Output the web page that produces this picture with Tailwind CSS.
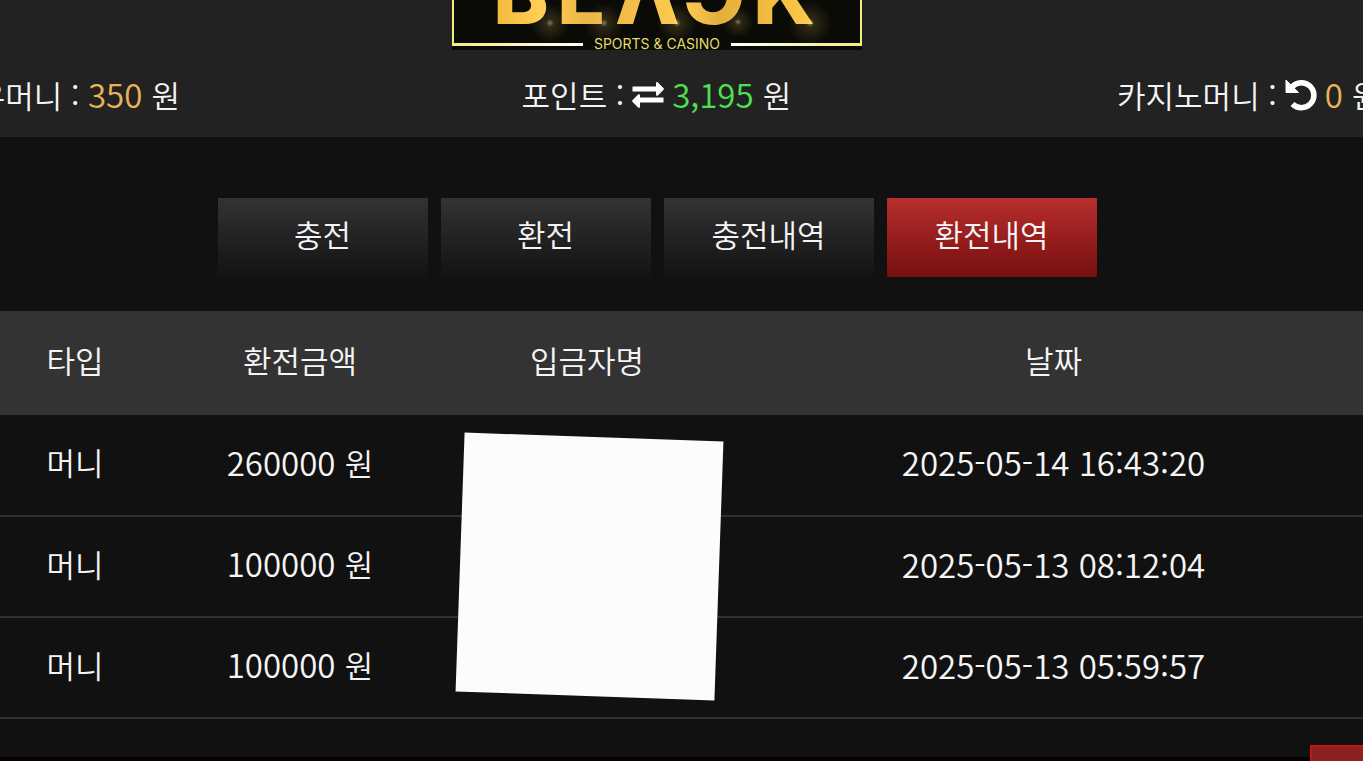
<!DOCTYPE html>
<html lang="ko">
<head>
  <meta charset="UTF-8">
  <meta name="viewport" content="width=device-width, initial-scale=1">
  <title>환전내역</title>
  <script src="https://cdn.jsdelivr.net/npm/@tailwindcss/browser@4"></script>
</head>
<body class="relative h-screen overflow-hidden bg-[#111111] text-[#f5f5f5] font-[350] text-[31px] leading-10 font-['Noto_Sans_CJK_KR',sans-serif]">

  <header class="overflow-hidden bg-[#222222] h-[137px]">
    <a href="#" class="block pr-[49px]">
      <svg class="block mx-auto" width="410" height="50" viewBox="0 0 410 50" role="img" aria-label="BLACK Sports &amp; Casino">
        <defs>
          <linearGradient id="gold" x1="0" y1="0" x2="1" y2="0">
            <stop offset="0" stop-color="#f3b93a"/>
            <stop offset="0.15" stop-color="#ffcf55"/>
            <stop offset="0.3" stop-color="#eab544"/>
            <stop offset="0.6" stop-color="#ffcb50"/>
            <stop offset="0.7" stop-color="#e3ae3c"/>
            <stop offset="1" stop-color="#ffc845"/>
          </linearGradient>
          <linearGradient id="lineL" x1="0" y1="0" x2="1" y2="0">
            <stop offset="0" stop-color="#f3ee7c"/>
            <stop offset="1" stop-color="#ffffff"/>
          </linearGradient>
          <linearGradient id="lineR" x1="0" y1="0" x2="1" y2="0">
            <stop offset="0" stop-color="#ffffff"/>
            <stop offset="1" stop-color="#f3ee7c"/>
          </linearGradient>
          <radialGradient id="glow">
            <stop offset="0" stop-color="#fff0b0" stop-opacity="0.5"/>
            <stop offset="0.2" stop-color="#ffd870" stop-opacity="0.15"/>
            <stop offset="1" stop-color="#ffd870" stop-opacity="0"/>
          </radialGradient>
        </defs>
        <rect width="410" height="50" fill="#0a0a06"/>
        <text x="41 105 163 231 301" y="24" font-family="Inter, sans-serif" font-weight="800" font-size="84" fill="url(#gold)">BLΛƆK</text>
        <circle cx="98" cy="23" r="20" fill="url(#glow)"/>
        <circle cx="152" cy="23" r="20" fill="url(#glow)"/>
        <circle cx="225" cy="23" r="20" fill="url(#glow)"/>
        <circle cx="286" cy="22" r="16" fill="url(#glow)"/>
        <circle cx="358" cy="23" r="22" fill="url(#glow)"/>
        <rect x="0" y="0" width="2" height="46" fill="#f3ee7c"/>
        <rect x="408" y="0" width="2" height="46" fill="#f3ee7c"/>
        <rect x="0" y="43" width="131" height="3" fill="url(#lineL)"/>
        <rect x="279" y="43" width="131" height="3" fill="url(#lineR)"/>
        <text x="205" y="49" text-anchor="middle" font-family="Inter, sans-serif" font-weight="400" font-size="14" fill="#e3dc6a">SPORTS &amp; CASINO</text>
      </svg>
    </a>

    <!-- balances: wider than the window, side columns run off screen -->
    <div class="grid grid-cols-3 -ml-[232px] -mr-[182px] mt-6 text-center whitespace-nowrap">
      <div>보유머니 : <span class="text-[33px] text-[#e8b45a]">350 </span>원</div>
      <div class="flex justify-center items-center gap-2">
        <span>포인트 :</span>
        <button type="button" aria-label="포인트 전환">
          <svg class="block" width="32" height="26" viewBox="0 0 32 26" fill="#ffffff">
            <path d="M0.500 4.500h23.500v-3.300c0-1 1.200-1.500 1.900-.8l5.500 5.500c.6.600.6 1.500 0 2.100l-5.500 5.500c-.7.700-1.900.2-1.900-.8v-3.200H.5z"/>
            <path d="M31.500 15.500H8v-2.200c0-1-1.200-1.500-1.900-.8L.6 18c-.6.600-.6 1.500 0 2.100l5.500 5.500c.7.700 1.900.2 1.900-.8v-4.300h23.500z"/>
          </svg>
        </button>
        <span><span class="text-[33px] text-[#4fe052]">3,195 </span>원</span>
      </div>
      <div class="flex justify-center items-center gap-2">
        <span>카지노머니 :</span>
        <button type="button" aria-label="새로고침">
          <svg class="block" width="32" height="32" viewBox="0 0 32 32">
            <path d="M7 8A12.500 12.500 0 1 1 7.500 25" fill="none" stroke="#ffffff" stroke-width="5.500"/>
            <path d="M1 1v12.500h12.500z" fill="#ffffff" stroke="#ffffff" stroke-linejoin="round"/>
          </svg>
        </button>
        <span><span class="text-[33px] text-[#e8b45a]">0 </span>원</span>
      </div>
    </div>
  </header>

  <nav class="flex justify-center gap-[13px] pt-[61px] pr-[49px]">
    <button type="button" class="w-[210px] h-[79px] pb-2 bg-linear-to-b from-[#333333] to-[#131313]">충전</button>
    <button type="button" class="w-[210px] h-[79px] pb-2 bg-linear-to-b from-[#333333] to-[#131313]">환전</button>
    <button type="button" class="w-[210px] h-[79px] pb-2 bg-linear-to-b from-[#333333] to-[#131313]">충전내역</button>
    <button type="button" class="w-[210px] h-[79px] pb-2 bg-linear-to-b from-[#b82e2e] to-[#770e0e]">환전내역</button>
  </nav>

  <div class="relative mt-[34px] -mr-5">
    <table class="w-full table-fixed text-center">
      <thead>
        <tr class="h-[104px] bg-[#333333]">
          <th class="w-[150px] pb-1.5 font-[350]">타입</th>
          <th class="w-[300px] pb-1.5 font-[350]">환전금액</th>
          <th class="w-[274px] pb-1.5 font-[350]">입금자명</th>
          <th class="pb-1.5 font-[350]">날짜</th>
        </tr>
      </thead>
      <tbody>
        <tr class="h-[101px] border-b-2 border-[#303030]">
          <td class="pb-1.5">머니</td>
          <td class="pb-1.5"><span class="text-[33px]">260000 </span>원</td>
          <td></td>
          <td class="pb-1.5 text-[33px]">2025-05-14 16:43:20</td>
        </tr>
        <tr class="h-[101px] border-b-2 border-[#303030]">
          <td class="pb-1.5">머니</td>
          <td class="pb-1.5"><span class="text-[33px]">100000 </span>원</td>
          <td></td>
          <td class="pb-1.5 text-[33px]">2025-05-13 08:12:04</td>
        </tr>
        <tr class="h-[101px] border-b-2 border-[#303030]">
          <td class="pb-1.5">머니</td>
          <td class="pb-1.5"><span class="text-[33px]">100000 </span>원</td>
          <td></td>
          <td class="pb-1.5 text-[33px]">2025-05-13 05:59:57</td>
        </tr>
      </tbody>
    </table>
    <!-- cover over the depositor names -->
    <div class="absolute left-[460px] top-[126px] size-[259px] rotate-2 bg-[#fcfcfc]"></div>
  </div>

  <div class="absolute inset-x-0 bottom-0 h-1 bg-[#0a0002]"></div>
  <button type="button" aria-label="맨 위로" class="absolute right-0 bottom-0 w-[53px] h-4 border-t-2 border-l-2 border-[#c01818] bg-[#8f2020]"></button>

</body>
</html>
